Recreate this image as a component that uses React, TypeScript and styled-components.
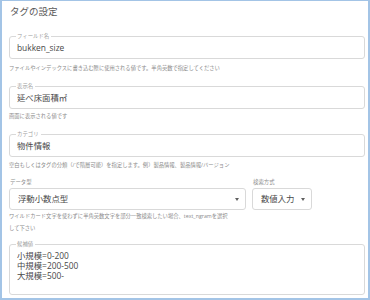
import styled, { createGlobalStyle } from "styled-components";

const GlobalStyle = createGlobalStyle`
  html, body {
    margin: 0;
    padding: 0;
    background: #ffffff;
  }
  body {
    font-family: "Open Sans", "Noto Sans CJK JP", sans-serif;
  }
`;

export default function App() {
  return (
    <>
      <GlobalStyle />
      <Panel>
        <Title>タグの設定</Title>

        <Field $top={13}>
          <Legend>フィールド名</Legend>
          <Value>bukken_size</Value>
        </Field>
        <Helper $top={5}>
          ファイルやインデックスに書き込む際に使用される値です。半角英数で指定してください
        </Helper>

        <Field $top={11}>
          <Legend>表示名</Legend>
          <Value>延べ床面積㎡</Value>
        </Field>
        <Helper $top={3}>画面に表示される値です</Helper>

        <Field $top={11}>
          <Legend>カテゴリ</Legend>
          <Value>物件情報</Value>
        </Field>
        <Helper $top={4}>
          空白もしくはタグの分類（/で階層可能）を指定します。例）製品情報、製品情報/バージョン
        </Helper>

        <SelectRow>
          <SelectGroup>
            <SmallLabel>データ型</SmallLabel>
            <SelectBox $width={237}>
              <SelectText>浮動小数点型</SelectText>
              <Caret />
            </SelectBox>
          </SelectGroup>
          <SelectGroup>
            <SmallLabel>検索方式</SmallLabel>
            <SelectBox $width={60}>
              <SelectText>数値入力</SelectText>
              <Caret />
            </SelectBox>
          </SelectGroup>
        </SelectRow>
        <Helper $top={0} $lineHeight={12}>
          ワイルドカード文字を使わずに半角英数文字を部分一致検索したい場合、text_ngramを選択
          <br />
          して下さい
        </Helper>

        <AreaField>
          <Legend>候補値</Legend>
          <AreaText>
            小規模=0-200
            <br />
            中規模=200-500
            <br />
            大規模=500-
          </AreaText>
        </AreaField>
      </Panel>
    </>
  );
}

const Panel = styled.div`
  width: 370px;
  height: 300px;
  box-sizing: border-box;
  border: 2px solid #a3c4e6;
  border-top-width: 1px;
  padding: 0 3px 0 7px;
  display: flex;
  flex-direction: column;
  background: #ffffff;
  overflow: hidden;
`;

const Title = styled.h2`
  margin: 0;
  padding: 3px 0 0 1px;
  font-size: 9.5px;
  line-height: 16px;
  font-weight: 400;
  color: #5a5a5a;
`;

const Field = styled.fieldset<{ $top: number }>`
  margin: ${(p) => p.$top}px 0 0 0;
  padding: 0 7px 2px 6px;
  border: 1px solid #d9d9d9;
  border-radius: 3px;
  min-width: 0;
`;

const Legend = styled.legend`
  padding: 0 2px 0 1px;
  margin-left: 0;
  font-size: 5.4px;
  line-height: 6px;
  color: #a0a0a0;
`;

const Value = styled.div`
  padding-left: 1px;
  font-size: 8.4px;
  line-height: 17px;
  color: #484848;
`;

const Helper = styled.p<{ $top: number; $lineHeight?: number }>`
  margin: ${(p) => p.$top}px 0 0 0;
  font-size: 5.3px;
  line-height: ${(p) => p.$lineHeight ?? 8}px;
  color: #8a8a8a;
  white-space: nowrap;
`;

const SelectRow = styled.div`
  display: flex;
  gap: 6px;
  margin-top: 9px;
`;

const SelectGroup = styled.div`
  display: flex;
  flex-direction: column;
  gap: 2px;
`;

const SmallLabel = styled.span`
  padding-left: 1px;
  font-size: 5.4px;
  line-height: 8px;
  color: #8c8c8c;
`;

const SelectBox = styled.div<{ $width: number }>`
  width: ${(p) => p.$width}px;
  height: 22px;
  box-sizing: border-box;
  border: 1px solid #d9d9d9;
  border-radius: 3px;
  padding: 0 6px 0 8px;
  display: flex;
  align-items: center;
  justify-content: space-between;
`;

const SelectText = styled.span`
  font-size: 8.4px;
  line-height: 12px;
  color: #484848;
  white-space: nowrap;
`;

const Caret = styled.span`
  width: 0;
  height: 0;
  border-left: 2.5px solid transparent;
  border-right: 2.5px solid transparent;
  border-top: 3px solid #606060;
`;

const AreaField = styled(Field).attrs({ $top: 7 })`
  height: 54px;
  box-sizing: border-box;
  padding-top: 4px;
`;

const AreaText = styled.div`
  padding-left: 1px;
  font-size: 8.4px;
  line-height: 10px;
  color: #484848;
`;
